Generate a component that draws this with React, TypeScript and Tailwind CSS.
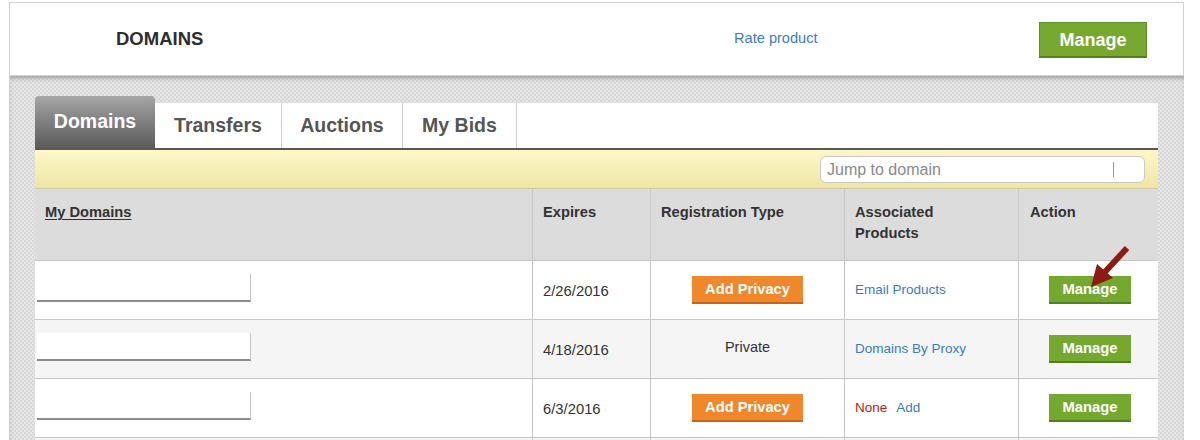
import React from "react";

const font = "font-['Liberation_Sans',Arial,Helvetica,sans-serif]";

function DomainBox() {
  return (
    <div className="ml-[2px] mt-[13px] h-[28px] w-[214px] bg-white border-b-2 border-b-[#8a8a8a] border-r border-r-[#c4c4c4]" />
  );
}

function RowManage() {
  return (
    <button className="h-[28px] w-[82px] bg-[#74a82e] border-b-2 border-b-[#52801d] text-white font-bold text-[14.8px] leading-none">
      Manage
    </button>
  );
}

function AddPrivacy() {
  return (
    <button className="h-[28px] w-[111px] bg-[#f1872b] border-b-2 border-b-[#c8641a] text-white font-bold text-[14.7px] leading-none">
      Add Privacy
    </button>
  );
}

type Row = {
  date: string;
  reg: React.ReactNode;
  assoc: React.ReactNode;
  bg: string;
};

export default function App() {
  const rows: Row[] = [
    {
      date: "2/26/2016",
      reg: <AddPrivacy />,
      assoc: <span className="text-[#3b7cc4]">Email Products</span>,
      bg: "bg-white",
    },
    {
      date: "4/18/2016",
      reg: <span className="text-[14.5px] text-[#333] -mt-[3px]">Private</span>,
      assoc: <span className="text-[#3b7cc4]">Domains By Proxy</span>,
      bg: "bg-[#f5f5f5]",
    },
    {
      date: "6/3/2016",
      reg: <AddPrivacy />,
      assoc: (
        <span>
          <span className="text-[#b3231b]">None</span>
          <span className="text-[#3b7cc4] ml-[9px]">Add</span>
        </span>
      ),
      bg: "bg-white",
    },
  ];

  const cols = "grid grid-cols-[498px_118px_194px_174px_139px]";

  return (
    <div className={`${font} relative w-[1200px] h-[440px] overflow-hidden bg-white text-[#333]`}>
      <div className="ml-[9px] mt-[2px] w-[1175px]">
        {/* Header */}
        <div className="h-[74px] bg-white border border-[#d2d2d2] flex items-center">
          <div className="w-[724px] pl-[106px]">
            <span className="font-bold text-[18.5px] text-[#2e2e2e]">DOMAINS</span>
          </div>
          <span className="text-[14.6px] text-[#3b7cc4] -mt-[1px]">Rate product</span>
          <button className="ml-auto mr-[36px] mt-[2px] h-[36px] w-[108px] bg-[#77a931] border border-[#5f8c24] border-b-2 border-b-[#557f1f] text-white font-bold text-[18px] leading-none">
            Manage
          </button>
        </div>

        {/* Gray textured area */}
        <div className="h-[400px] pl-[25px] pr-[26px] pt-[20px] bg-[#dedede] bg-[image:repeating-conic-gradient(#d7d7d7_0_25%,#e6e6e6_0_50%)] bg-[length:4px_4px] shadow-[inset_0_4px_4px_-2px_rgba(0,0,0,0.3)] border-l border-[#cfcfcf]">
          <div className="w-[1123px]">
            {/* Tabs */}
            <div className="flex items-end border-b-2 border-[#575757]">
              <div className="h-[52px] w-[120px] rounded-t-[4px] bg-linear-to-b from-[#a6a6a6] to-[#5b5b5b] flex items-center justify-center">
                <span className="text-white font-bold text-[19.5px] -mt-[1px]">Domains</span>
              </div>
              <div className="h-[45px] w-[127px] bg-white border-r border-[#cccccc] flex items-center justify-center">
                <span className="text-[#555] font-bold text-[19.5px]">Transfers</span>
              </div>
              <div className="h-[45px] w-[121px] bg-white border-r border-[#cccccc] flex items-center justify-center">
                <span className="text-[#555] font-bold text-[19.5px]">Auctions</span>
              </div>
              <div className="h-[45px] w-[114px] bg-white border-r border-[#cccccc] flex items-center justify-center">
                <span className="text-[#555] font-bold text-[19.5px]">My Bids</span>
              </div>
              <div className="h-[45px] flex-1 bg-white" />
            </div>

            {/* Yellow search bar */}
            <div className="h-[39px] bg-linear-to-b from-[#fdf8c8] to-[#eee6a3] border-b border-[#cdc8a0] flex items-center justify-end pr-[13px]">
              <div className="h-[27px] w-[325px] mt-[1px] bg-white border border-[#c9c9c9] rounded-[6px] flex items-center pl-[6px] pr-[30px]">
                <span className="text-[16px] text-[#8a8a8a] flex-1">Jump to domain</span>
                <div className="w-px h-[15px] bg-[#999]" />
              </div>
            </div>

            {/* Table header */}
            <div className={`${cols} h-[72px] bg-[#dcdcdc] border-b border-[#c6c6c6] text-[14.7px] font-bold text-[#333] leading-[21px]`}>
              <div className="pl-[10px] pt-[13px] border-r border-[#c6c6c6]">
                <span className="underline underline-offset-2">My Domains</span>
              </div>
              <div className="pl-[10px] pt-[13px] border-r border-[#c6c6c6]">Expires</div>
              <div className="pl-[10px] pt-[13px] border-r border-[#c6c6c6]">Registration Type</div>
              <div className="pl-[10px] pt-[13px] border-r border-[#c6c6c6]">
                Associated
                <br />
                Products
              </div>
              <div className="pl-[11px] pt-[13px]">Action</div>
            </div>

            {/* Rows */}
            {rows.map((r, i) => (
              <div key={i} className={`${cols} h-[59px] ${r.bg} border-b border-[#c8c8c8]`}>
                <div className="border-r border-[#c8c8c8]">
                  <DomainBox />
                </div>
                <div className="pl-[10px] pt-[2px] border-r border-[#c8c8c8] flex items-center text-[14.8px] text-[#333]">
                  {r.date}
                </div>
                <div className="border-r border-[#c8c8c8] flex items-center justify-center">{r.reg}</div>
                <div className="pl-[10px] border-r border-[#c8c8c8] flex items-center text-[13.5px]">{r.assoc}</div>
                <div className="flex items-center pl-[30px]">
                  <RowManage />
                </div>
              </div>
            ))}
            <div className={`${cols} h-[30px] bg-[#f5f5f5]`}>
              <div className="border-r border-[#c8c8c8]" />
              <div className="border-r border-[#c8c8c8]" />
              <div className="border-r border-[#c8c8c8]" />
              <div className="border-r border-[#c8c8c8]" />
              <div />
            </div>
          </div>
        </div>
      </div>

      {/* Arrow overlay */}
      <svg className="absolute left-[1085px] top-[243px]" width="48" height="48" viewBox="0 0 48 48">
        <line x1="42" y1="5" x2="19" y2="30" stroke="#8e1b12" strokeWidth="6" strokeLinecap="butt" />
        <polygon points="6,44 12,21 28,35" fill="#8e1b12" />
      </svg>
    </div>
  );
}
